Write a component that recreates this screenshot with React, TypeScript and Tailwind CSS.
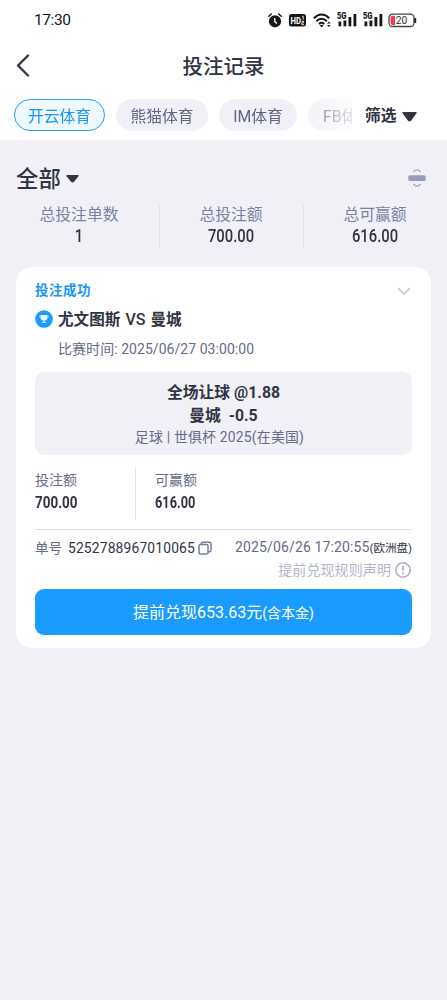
import React from "react";

const tabs = [
  { name: "开云体育", className: "w-[91px] border-[1.5px] border-[#2b9df0] bg-[#edf8ff] leading-[30px] text-[#1a96f3]" },
  { name: "熊猫体育", className: "w-[92px] bg-[#f1f0f6] leading-[32px] text-[#5f6484]" },
  { name: "IM体育", className: "w-[78px] bg-[#f1f0f6] leading-[32px] text-[#5f6484]" },
  { name: "FB体育", className: "w-[80px] bg-[#f1f0f6] leading-[32px] text-[#5f6484]" },
];

const totals = [
  { label: "总投注单数", value: "1" },
  { label: "总投注额", value: "700.00" },
  { label: "总可赢额", value: "616.00" },
];

const Signal = () => (
  <svg width="20" height="16" viewBox="0 0 20 16" fill="#161616">
    <text x="0" y="7" fontSize="8.5" fontWeight="900" fontFamily="Roboto, sans-serif" textLength="9.5" lengthAdjust="spacingAndGlyphs">
      5G
    </text>
    <rect x="1.5" y="9.5" width="2.8" height="4.8" />
    <rect x="6.5" y="8.5" width="2.8" height="5.8" />
    <rect x="11.5" y="5" width="2.8" height="9.3" />
    <rect x="16.5" y="2" width="2.8" height="12.3" />
  </svg>
);

const StatusBar = () => (
  <div className="flex h-10 items-center pl-[34px] pr-[30px]">
    <span className="text-[15.5px] leading-5 tracking-[-0.4px] text-[#161616]">17:30</span>
    <div className="ml-auto flex items-center">
      <svg width="14" height="15" viewBox="0 0 14 15" fill="#161616">
        <circle cx="7" cy="8.3" r="6.1" />
        <path d="M.8 3.3 3.3 1M13.2 3.3 10.7 1" stroke="#161616" strokeWidth="1.5" strokeLinecap="round" />
        <path d="M6.8 5v3.6l2.2 1.8" fill="none" stroke="#fff" strokeWidth="1.3" />
      </svg>
      <svg className="ml-[7px]" width="17" height="13" viewBox="0 0 17 13">
        <rect width="17" height="12.5" rx="2.5" fill="#161616" />
        <text x="1.5" y="9.8" fontSize="9.5" fontWeight="700" fill="#fff" fontFamily="Roboto, sans-serif" textLength="10.5" lengthAdjust="spacingAndGlyphs">
          HD
        </text>
        <path d="M13 2.2h1.2v3.3M12.6 7.2h2v1.7h-1.8v1.8H15" fill="none" stroke="#fff" strokeWidth=".9" />
      </svg>
      <svg className="ml-[7px]" width="19" height="15" viewBox="0 0 19 15" fill="none" stroke="#161616" strokeWidth="1.9">
        <path d="M.8 5.2Q8.6-2 16.4 5.2M3.3 8.2Q8.6 3.4 13.9 8.2M5.9 11Q8.6 8.7 11.3 11" />
        <path d="m6.6 12 2 2.4 2-2.4Z" fill="#161616" stroke="none" />
        <path d="m14 10.4 1.8-2 1.8 2ZM14 12l1.8 2 1.8-2Z" fill="#161616" stroke="none" />
      </svg>
      <div className="ml-[5px] flex gap-[6px]">
        <Signal />
        <Signal />
      </div>
      <svg className="ml-[5px]" width="29" height="15" viewBox="0 0 29 15">
        <rect x="1" y="1.2" width="25" height="12.3" rx="3.5" fill="#fff" stroke="#444" strokeWidth="1.3" />
        <path d="M27.2 5v5" stroke="#222" strokeWidth="2" />
        <path d="M4.5 2.8H7v9.2H4.5Q2.6 12 2.6 10V4.8Q2.6 2.8 4.5 2.8Z" fill="#ec3a4e" />
        <text x="7.7" y="11.1" fontSize="10.3" fill="#333" fontFamily="Roboto, sans-serif">
          20
        </text>
      </svg>
    </div>
  </div>
);

const App = () => {
  return (
    <div className="min-h-screen w-full bg-[#f1f0f6] font-['Roboto','Noto_Sans_CJK_SC',sans-serif] text-[#303442]">
      <header className="h-[140px] bg-white">
        <StatusBar />
        <div className="grid h-[52px] grid-cols-[60px_1fr_60px] items-center">
          <svg className="ml-4" width="14" height="24" viewBox="0 0 14 24" fill="none" stroke="#303442" strokeWidth="2.3" strokeLinecap="round" strokeLinejoin="round">
            <path d="M12 1.5 2 11.5l10 10" />
          </svg>
          <h1 className="pt-[2px] text-center text-[20.5px] font-medium leading-7">投注记录</h1>
        </div>
        <div className="mt-[7px] flex pl-[14px]">
          <div className="flex w-[338px] gap-[11px] overflow-hidden [mask-image:linear-gradient(to_right,#000_285px,transparent_350px)]">
            {tabs.map((tab) => (
              <button
                key={tab.name}
                className={`${tab.className} h-8 shrink-0 whitespace-nowrap rounded-full pt-[2px] text-center text-[15.8px]`}
              >
                {tab.name}
              </button>
            ))}
          </div>
          <button className="ml-[13px] flex items-center text-[15.8px] font-bold">
            <span className="pt-[2px]">筛选</span>
            <svg className="ml-[5px] mt-[3px]" width="15" height="10" viewBox="0 0 15 10" fill="#303442">
              <path d="M1.5 0h12q2 0 .8 1.6L9 8.7q-1.5 1.6-3 0L.7 1.6Q-.5 0 1.5 0Z" />
            </svg>
          </button>
        </div>
      </header>

      <section className="h-[127px] pt-6">
        <div className="flex h-[30px] items-center pl-4 pr-[21px]">
          <span className="text-[22.4px] font-medium leading-[30px]">全部</span>
          <svg className="ml-[5px]" width="13" height="8" viewBox="0 0 13 8" fill="#303442">
            <path d="M1.3 0h10.4q1.8 0 .6 1.5L8 6.8q-1.5 1.4-3 0L.7 1.5Q-.5 0 1.3 0Z" />
          </svg>
          <svg className="mb-[2px] ml-auto" width="18" height="20" viewBox="0 0 18 20" fill="none" stroke="#a4a9bf" strokeWidth="1.4">
            <path d="M5.5 4Q9-.2 12.5 4M5.5 16Q9 20.2 12.5 16" />
            <rect x="0.3" y="7.2" width="17.4" height="5.8" rx="1.5" fill="#959db9" stroke="none" />
          </svg>
        </div>
        <div className="mt-[10px] grid h-11 grid-cols-[160px_144px_143px] text-center">
          {totals.map((item, i) => (
            <div key={item.label} className={i < 2 ? "border-r border-[#e4e4eb] pr-px" : "pr-px"}>
              <p className="text-[15.8px] leading-[22px] text-[#7981a5]">{item.label}</p>
              <p className="mt-[-1px] scale-x-[0.82] text-[18px] font-medium leading-[22px]">{item.value}</p>
            </div>
          ))}
        </div>
      </section>

      <article className="mx-4 h-[381px] rounded-[16px] bg-white px-[19px] pt-[13px]">
        <div className="flex h-5 items-center justify-between">
          <span className="text-[13.5px] font-bold tracking-[0.5px] text-[#1a96f3]">投注成功</span>
          <svg className="mr-px mt-[3px]" width="14" height="9" viewBox="0 0 14 9" fill="none" stroke="#cfd1df" strokeWidth="2" strokeLinecap="round">
            <path d="m1.5 1.5 5.5 5.5 5.5-5.5" />
          </svg>
        </div>
        <div className="mt-[7px] flex h-6 items-center">
          <svg width="18" height="18" viewBox="0 0 18 18">
            <circle cx="9" cy="9" r="8.8" fill="#1a9bff" />
            <path d="M5.5 5h7v2.5Q12.5 10.5 9 10.8Q5.5 10.5 5.5 7.5Z" fill="#e3f3ff" />
            <path d="M4.3 5.5h1.2v3Q4.3 7.8 4.3 5.5ZM13.7 5.5h-1.2v3Q13.7 7.8 13.7 5.5Z" fill="#bfe2ff" />
            <path d="M8.3 10.5h1.4v1.5h1.5v1H6.8v-1h1.5Z" fill="#c9e7ff" />
          </svg>
          <h2 className="ml-[5px] pt-[2px] text-[15.6px] font-bold">
            尤文图斯<span className="mx-[5px] text-[16px] font-medium">VS</span>曼城
          </h2>
        </div>
        <p className="mt-[8px] h-5 pl-[23px] text-[14px] leading-5 tracking-[0.05px] text-[#666b8b]">
          比赛时间: 2025/06/27 03:00:00
        </p>

        <div className="mt-[13px] h-[83px] rounded-[9px] bg-[#f1f0f6] pt-[9px] text-center">
          <p className="text-[15.8px] font-bold leading-[23px]">全场让球 @1.88</p>
          <p className="whitespace-pre text-[15.8px] font-bold leading-[23px]">曼城  -0.5</p>
          <p className="pr-[8px] pt-px text-[13.9px] leading-[19px] tracking-[0.2px] text-[#666b8b]">足球 | 世俱杯 2025(在美国)</p>
        </div>

        <div className="mt-[13px] flex h-[52px]">
          <div className="w-[101px] border-r border-[#e4e4ea]">
            <p className="mt-px text-[14px] leading-[22px] text-[#666b8b]">投注额</p>
            <p className="origin-left scale-x-[0.84] text-[16px] font-bold leading-[23px]">700.00</p>
          </div>
          <div className="pl-[19px]">
            <p className="mt-px text-[14px] leading-[22px] text-[#666b8b]">可赢额</p>
            <p className="origin-left scale-x-[0.8] text-[16px] font-bold leading-[23px]">616.00</p>
          </div>
        </div>

        <div className="mt-[9px] flex items-center border-t border-[#dfdfe4] pt-[7px] text-[14px] leading-5">
          <span className="text-[13.5px] text-[#666b8b]">单号</span>
          <span className="ml-[6px] pt-px text-[13.8px] tracking-[0.18px]">5252788967010065</span>
          <svg className="ml-[3px]" width="14" height="14" viewBox="0 0 14 14" fill="none" stroke="#777e9f" strokeWidth="1.5">
            <rect x="1" y="3.5" width="9" height="9.5" rx="1.3" />
            <path d="M3.3 3.5V2.7Q3.3 1.2 4.8 1.2h6.7q1.5 0 1.5 1.5v6.5q0 1.5-1.5 1.5H10" />
          </svg>
          <span className="ml-auto whitespace-nowrap text-[14px] tracking-[0.13px] text-[#666b8b]">
            2025/06/26 17:20:55<span className="text-[11.5px] tracking-[0] text-[#303442]">(欧洲盘)</span>
          </span>
        </div>
        <div className="mt-[2px] flex h-5 items-center justify-end text-[14px] tracking-[0.1px] text-[#b3b5cb]">
          提前兑现规则声明
          <svg className="ml-[4px] mr-px" width="16" height="16" viewBox="0 0 16 16" fill="none" stroke="#a9abc5" strokeWidth="1.5">
            <circle cx="8" cy="8" r="7.2" />
            <path d="M8 3.8v5M8 10.5v1.7" strokeWidth="1.7" />
          </svg>
        </div>
        <button className="mt-[9px] h-[46px] w-full rounded-[9px] bg-[#1a9bff] pt-[2px] text-center text-[16px] text-white">
          提前兑现653.63元<span className="text-[14px]">(含本金)</span>
        </button>
      </article>
    </div>
  );
};

export default App;
